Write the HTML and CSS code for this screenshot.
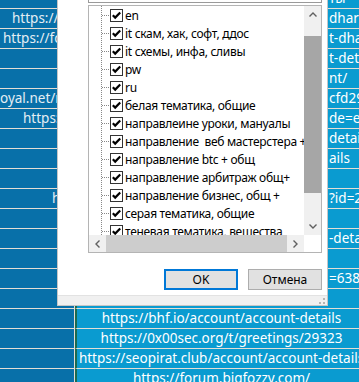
FILE: index.html
```html
<!DOCTYPE html>
<html>
    <head>
        <meta charset="utf-8">
        <link rel="stylesheet" href="styles.css">
    </head>
    <body>
        <svg class="defs">
            <symbol id="chk" viewBox="0 0 13 13">
                <rect x="0.5" y="0.5" width="12" height="12" fill="#fff" stroke="#333"/>
                <path d="M2.8 6.2 L5.2 8.6 L10.2 3.4" fill="none" stroke="#000" stroke-width="2.2"/>
            </symbol>
        </svg>
        <div class="sheet">
            <div class="row"><div class="ca"></div><div class="cb tail">ты</div></div>
            <div class="row"><div class="ca i12">https://forum.dharma.com/account</div><div class="cb tail">dharma.com/</div></div>
            <div class="row"><div class="ca i3">https://forum.net/account</div><div class="cb tail">t-dharma</div></div>
            <div class="row"><div class="ca"></div><div class="cb tail">t-details</div></div>
            <div class="row"><div class="ca"></div><div class="cb tail">nt/</div></div>
            <div class="row"><div class="ca i0">oyal.net/ru/account</div><div class="cb tail">cfd29a1</div></div>
            <div class="row"><div class="ca i23">https://forum.net</div><div class="cb tail">de=eng</div></div>
            <div class="row"><div class="ca"></div><div class="cb tail">details</div></div>
            <div class="row"><div class="ca"></div><div class="cb tail">ails</div></div>
            <div class="row"><div class="ca"></div><div class="cb"></div></div>
            <div class="row"><div class="ca i52">https://</div><div class="cb tail">?id=2417</div></div>
            <div class="row"><div class="ca"></div><div class="cb"></div></div>
            <div class="row"><div class="ca"></div><div class="cb tail">-details</div></div>
            <div class="row"><div class="ca"></div><div class="cb"></div></div>
            <div class="row"><div class="ca"></div><div class="cb tail">=638c1</div></div>
            <div class="row"><div class="ca"></div><div class="cb"></div></div>
            <div class="row"><div class="ca"></div><div class="cb">https://bhf.io/account/account-details</div></div>
            <div class="row"><div class="ca"></div><div class="cb">https://0x00sec.org/t/greetings/29323</div></div>
            <div class="row"><div class="ca"></div><div class="cb">https://seopirat.club/account/account-details</div></div>
            <div class="row"><div class="ca"></div><div class="cb">https://forum.bigfozzy.com/</div></div>
        </div>

        <div class="dlg">
            <div class="search"></div>
            <div class="list">
                <div class="items">
                    <div class="item"><svg class="box"><use href="#chk"/></svg><span>en</span></div>
                    <div class="item"><svg class="box"><use href="#chk"/></svg><span>it скам, хак, софт, ддос</span></div>
                    <div class="item"><svg class="box"><use href="#chk"/></svg><span>it схемы, инфа, сливы</span></div>
                    <div class="item"><svg class="box"><use href="#chk"/></svg><span>pw</span></div>
                    <div class="item"><svg class="box"><use href="#chk"/></svg><span>ru</span></div>
                    <div class="item"><svg class="box"><use href="#chk"/></svg><span>белая тематика, общие</span></div>
                    <div class="item"><svg class="box"><use href="#chk"/></svg><span>направлеине уроки, мануалы</span></div>
                    <div class="item"><svg class="box"><use href="#chk"/></svg><span>направление  веб мастерстера +</span></div>
                    <div class="item"><svg class="box"><use href="#chk"/></svg><span>направление btc + общ</span></div>
                    <div class="item"><svg class="box"><use href="#chk"/></svg><span>направление арбитраж общ+</span></div>
                    <div class="item"><svg class="box"><use href="#chk"/></svg><span>направление бизнес, общ +</span></div>
                    <div class="item"><svg class="box"><use href="#chk"/></svg><span>серая тематика, общие</span></div>
                    <div class="item"><svg class="box"><use href="#chk"/></svg><span>теневая тематика, вещества</span></div>
                </div>
                <div class="vbar">
                    <div class="sbtn"><svg width="8" height="5"><path d="M0.5 4.5 L4 1 L7.5 4.5" fill="none" stroke="#606060" stroke-width="1.4"/></svg></div>
                    <div class="vtrack"><div class="vthumb"></div></div>
                    <div class="sbtn"><svg width="8" height="5"><path d="M0.5 0.5 L4 4 L7.5 0.5" fill="none" stroke="#606060" stroke-width="1.4"/></svg></div>
                </div>
                <div class="hbar">
                    <div class="sbtn"><svg width="5" height="8"><path d="M4.5 0.5 L1 4 L4.5 7.5" fill="none" stroke="#606060" stroke-width="1.4"/></svg></div>
                    <div class="hthumb"></div>
                    <div class="sbtn"><svg width="5" height="8"><path d="M0.5 0.5 L4 4 L0.5 7.5" fill="none" stroke="#606060" stroke-width="1.4"/></svg></div>
                </div>
                <div class="corner"></div>
            </div>
            <div class="btns">
                <button class="btn ok">OK</button>
                <button class="btn">Отмена</button>
            </div>
            <div class="foot">
                <svg class="grip" width="6" height="6">
                    <rect x="4" y="0" width="2" height="2" fill="#b4b4b4"/>
                    <rect x="0" y="4" width="2" height="2" fill="#b4b4b4"/>
                    <rect x="4" y="4" width="2" height="2" fill="#b4b4b4"/>
                </svg>
            </div>
        </div>
    </body>
</html>
```

FILE: styles.css
```css
*{
    box-sizing:border-box;
}
body{
    margin:0;
    overflow:hidden;
    background:#0a9bd0;
    font-family:"Noto Sans","Open Sans",sans-serif;
}
.defs{
    position:absolute;
    width:0;
    height:0;
}
/* spreadsheet behind the dialog */
.sheet{
    margin-top:-11px;
}
.row{
    display:flex;
    height:20px;
}
.ca, .cb{
    flex-shrink:0;
    height:20px;
    line-height:19px;
    font-size:13.5px;
    white-space:pre;
    overflow:hidden;
    border-bottom:1px solid #e3ded5;
}
.ca{
    width:75px;
    background:#0870a9;
    color:#e4eef4;
    border-right:1px solid #e3ded5;
}
.cb{
    width:291px;
    background:#0a9bd0;
    color:#fff;
    text-align:center;
    border-left:2px solid #1c6a50;
}
.cb.tail{
    text-align:left;
    padding-left:252px;
}
.i0{padding-left:0;}
.i3{padding-left:3px;}
.i12{padding-left:12px;}
.i23{padding-left:23px;}
.i52{padding-left:52px;}

/* filter dialog */
.dlg{
    position:absolute;
    left:57px;
    top:-30px;
    width:271px;
    background:#fff;
    border:1px solid #c6c6c6;
    padding:7px 5px 0 30px;
    font-size:12px;
    color:#000;
}
.search{
    height:25px;
    border:1px solid #9a9a9a;
}
.list{
    margin-top:2px;
    height:248px;
    border:1px solid #b4b4b4;
    display:grid;
    grid-template-columns:215px 17px;
    grid-template-rows:229px 17px;
}
.items{
    overflow:hidden;
    background-image:linear-gradient(#888 50%, transparent 50%);
    background-size:1px 2px;
    background-repeat:repeat-y;
    background-position:12px 0;
}
.item{
    display:flex;
    align-items:center;
    height:18px;
    white-space:pre;
}
.item::before{
    content:"";
    flex-shrink:0;
    width:8px;
    height:1px;
    margin-left:13px;
    background-image:linear-gradient(90deg, #888 50%, transparent 50%);
    background-size:2px 1px;
}
.box{
    width:13px;
    height:13px;
    flex-shrink:0;
}
.item span{
    flex-shrink:0;
    margin-left:2px;
    letter-spacing:-0.3px;
}
.vbar{
    display:flex;
    flex-direction:column;
    background:#f0f0f0;
}
.sbtn{
    width:17px;
    height:17px;
    display:flex;
    align-items:center;
    justify-content:center;
    flex-shrink:0;
}
.vtrack{
    flex:1;
}
.vthumb{
    margin-top:13px;
    height:157px;
    background:#a6a6a6;
}
.hbar{
    display:flex;
    background:#f0f0f0;
}
.hthumb{
    flex:1;
    background:#cdcdcd;
}
.corner{
    background:#fff;
}
.btns{
    display:flex;
    justify-content:flex-end;
    gap:10px;
    margin-top:16px;
}
.btn{
    width:74px;
    height:21px;
    padding:0;
    background:#e1e1e1;
    border:1px solid #adadad;
    font-family:"Noto Sans","Open Sans",sans-serif;
    font-size:12px;
    color:#000;
}
.btn.ok{
    border:2px solid #0078d7;
}
.foot{
    margin:5px -5px 0 -30px;
    height:10px;
    background:#f0f0f0;
    border-top:1px solid #e2e2e2;
    display:flex;
    justify-content:flex-end;
    align-items:flex-end;
    padding:0 2px 1px 0;
}
```
